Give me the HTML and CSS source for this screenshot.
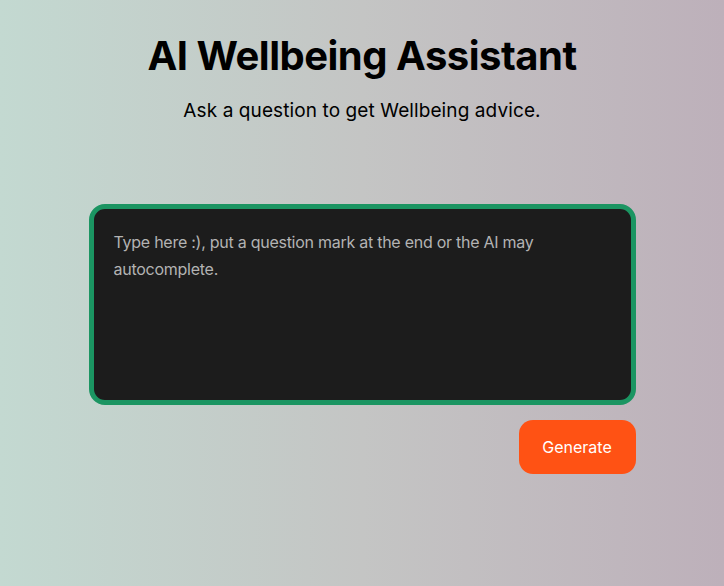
FILE: index.html
```html
<!DOCTYPE html>
<html lang="en">
<head>
<meta charset="utf-8">
<title>AI Wellbeing Assistant</title>
<link rel="stylesheet" href="styles.css">
</head>
<body>
<main class="page">
  <h1 class="title">AI Wellbeing Assistant</h1>
  <p class="subtitle">Ask a question to get Wellbeing advice.</p>
  <div class="form">
    <textarea class="prompt" placeholder="Type here :), put a question mark at the end or the AI may autocomplete."></textarea>
    <div class="actions">
      <button class="generate" type="button">Generate</button>
    </div>
  </div>
</main>
</body>
</html>
```

FILE: styles.css
```css
html, body {
  margin: 0;
  padding: 0;
  height: 100%;
}
body {
  background: linear-gradient(90deg, #c3d9d1 0%, #c4c5c4 50%, #bdb0ba 100%);
  font-family: Inter, "Open Sans", sans-serif;
  color: #000;
}
.page {
  display: flex;
  flex-direction: column;
  align-items: center;
  padding-top: 30px;
}
.title {
  margin: 0;
  font-size: 40px;
  font-weight: 700;
  line-height: 52px;
  letter-spacing: -0.5px;
}
.subtitle {
  margin: 15px 0 0;
  font-size: 19px;
  font-weight: 400;
  line-height: 28px;
  letter-spacing: 0.1px;
}
.form {
  width: 547px;
  margin-top: 79px;
  display: flex;
  flex-direction: column;
}
.prompt {
  display: block;
  box-sizing: border-box;
  width: 100%;
  height: 201px;
  border: 5px solid #1b9562;
  border-radius: 16px;
  background: #1c1c1c;
  color: #ddd;
  padding: 20px 20px;
  margin: 0;
  font-family: Inter, "Open Sans", sans-serif;
  font-size: 16px;
  line-height: 27px;
  letter-spacing: -0.26px;
  resize: none;
  outline: none;
}
.prompt::placeholder {
  color: #b3b3b3;
}
.actions {
  display: flex;
  justify-content: flex-end;
  margin-top: 15px;
}
.generate {
  width: 117px;
  height: 54px;
  border: none;
  border-radius: 14px;
  background: #ff5214;
  color: #fff;
  font-family: Inter, "Open Sans", sans-serif;
  font-size: 16px;
  cursor: pointer;
}
```
